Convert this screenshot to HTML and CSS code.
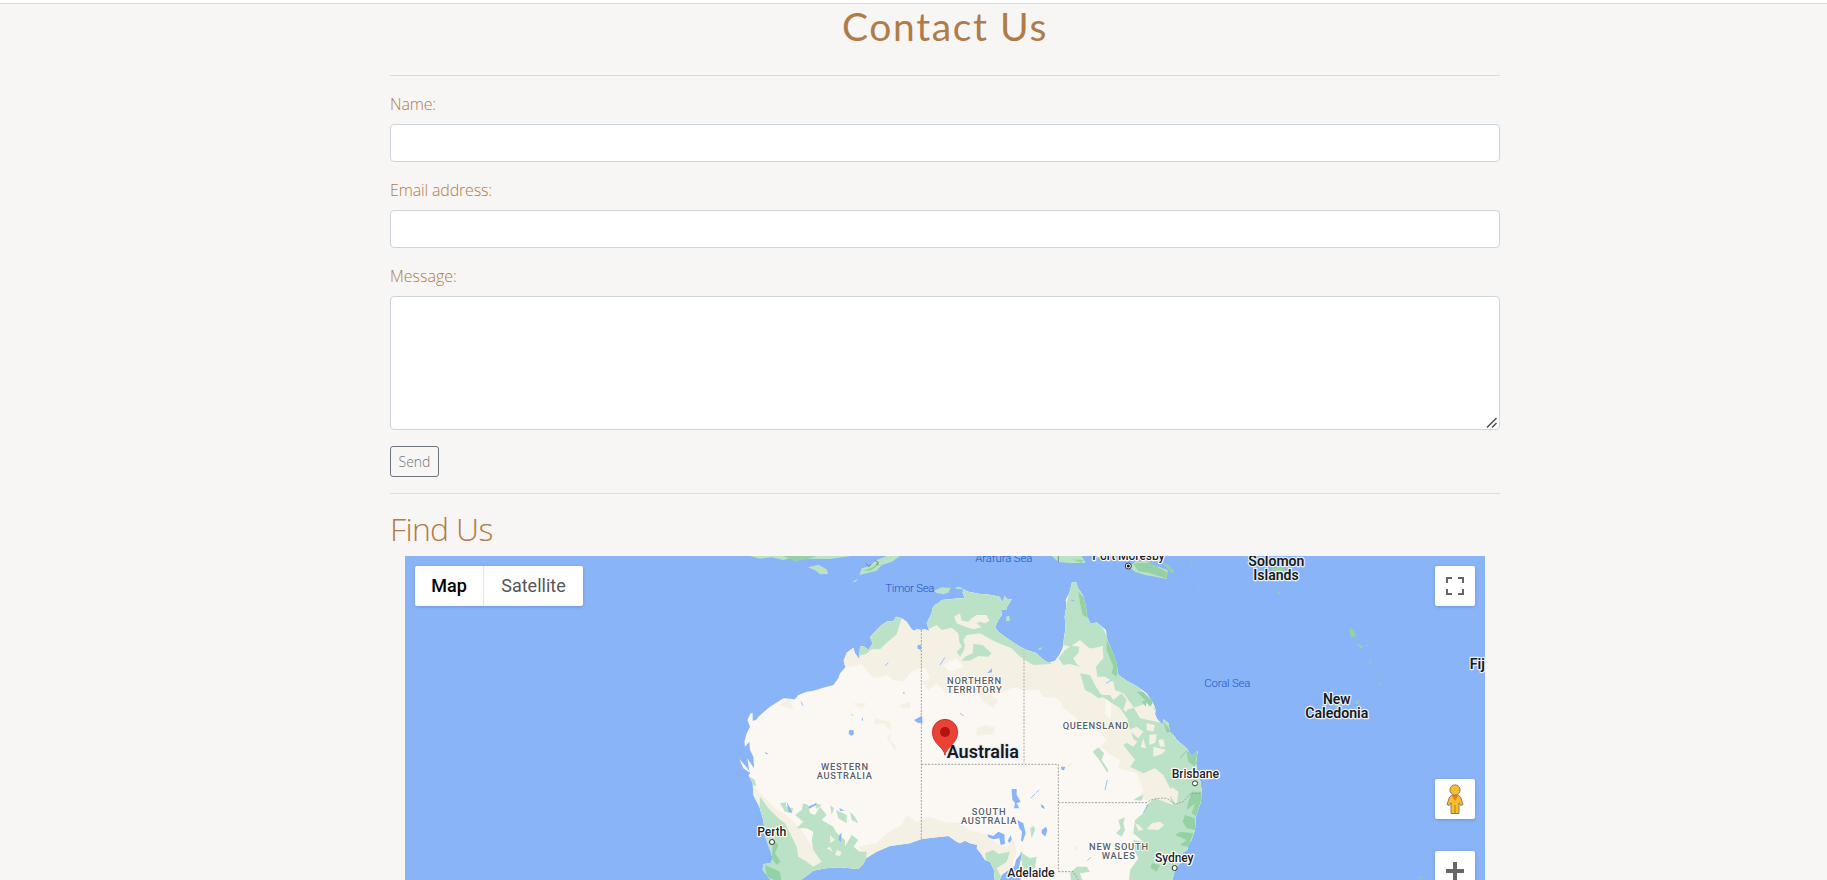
FILE: index.html
```html
<!DOCTYPE html>
<html lang="en">
<head>
<meta charset="utf-8">
<title>Contact Us</title>
<link rel="stylesheet" href="styles.css">
</head>
<body>
<div class="topbar"></div>
<main class="page">
  <h1 class="title"><span>Contact Us</span></h1>
  <hr class="rule">
  <form class="form">
    <div class="group"><label class="label name" for="name">Name:</label><input class="control" id="name" type="text"></div>
    <div class="group"><label class="label email" for="email">Email address:</label><input class="control" id="email" type="email"></div>
    <div class="group area-wrap"><label class="label message" for="msg">Message:</label><textarea class="control area" id="msg" rows="5"></textarea><svg class="grip" width="12" height="12" viewBox="0 0 12 12"><path d="M1 10.500 10.500 1M6 10.500 10.500 6"/></svg></div>
    <button class="send" type="button">Send</button>
  </form>
  <hr class="rule">
  <h2 class="subtitle">Find Us</h2>
  <div class="map">
    <svg class="canvas" viewBox="-975 18 3240 972" preserveAspectRatio="none">
      <defs>
        <path id="land" d="M515 205L530 215 545 238 555 243 560 236 572 240 585 238 598 243 590 220 605 190 607 175 615 165 625 160 635 150 690 145 705 146 698 128 700 118 715 125 750 132 785 135 810 141 812 152 820 153 823 138 832 147 845 148 838 160 832 168 828 180 813 178 815 195 805 210 795 232 805 245 835 268 870 290 890 300 920 310 938 328 955 338 975 332 988 315 998 295 1002 265 1007 235 1004 200 1010 165 1007 150 1018 130 1025 98 1038 95 1045 115 1060 138 1067 165 1072 200 1082 222 1100 217 1128 240 1132 270 1145 300 1160 340 1165 375 1190 392 1220 408 1250 430 1268 455 1277 480 1275 492 1282 508 1298 525 1300 508 1315 520 1320 545 1335 560 1340 570 1370 595 1385 620 1403 602 1398 640 1403 665 1410 690 1415 720 1413 755 1398 800 1395 840 1385 870 1375 885 1372 900 1358 908 1350 940 1335 960 1325 1000 870 1000 872 980 868 948 875 915 877 903 870 915 858 930 854 948 835 960 815 975 805 1000 795 1000 792 960 780 935 765 930 752 910 740 895 742 885 720 880 705 872 690 880 680 875 655 858 620 862 575 867 540 880 480 888 440 905 408 925 400 942 385 957 330 952 285 955 250 962 220 985 200 1000 130 1000 110 975 98 960 100 942 122 940 128 925 120 900 105 860 100 810 88 770 70 735 68 700 55 675 62 670 40 655 28 627 44 645 58 663 52 625 72 655 70 620 60 600 58 575 45 590 43 575 50 550 60 530 52 510 62 490 68 490 68 512 78 510 85 500 120 470 160 445 195 448 205 435 230 425 250 422 285 412 310 405 325 385 330 370 346 352 341 332 350 308 370 293 375 310 388 328 390 290 400 288 415 300 428 280 420 262 440 240 455 225 470 215 490 213 498 200Z"/>
        <clipPath id="inland"><use href="#land"/></clipPath>
      </defs>
      <rect class="water" x="-975" y="18" width="3240" height="972"/>
      <use href="#land" class="land"/>
      <g clip-path="url(#inland)">
        <!-- dry grassland -->
        <path class="sand" d="M330 352L365 350 395 342 430 385 470 375 490 390 520 395 540 370 560 358 585 352 600 385 575 395 595 420 620 400 650 430 700 435 740 430 760 455 790 475 805 450 780 435 810 430 850 412 880 420 925 420 940 440 985 445 1000 475 1035 500 1060 530 1105 545 1130 570 1110 590 1150 620 1170 630 1165 655 1220 670 1240 720 1225 745 1330 770 1340 720 1420 720 1380 560 1180 380 1050 200 1000 90 600 100 330 240ZM62 700L130 770 175 800 215 840 240 880 278 930 400 920 385 890 440 880 470 850 515 825 530 795 560 815 600 800 640 815 690 820 720 840 760 850 800 880 830 895 850 870 860 905 830 990 700 985 560 870 410 950 240 1000 190 920 60 760ZM145 465L180 445 190 480 165 470ZM365 460L410 460 395 475ZM435 505L480 515 485 545 460 520 435 525ZM470 560L485 550 480 570 500 590 495 602ZM510 465L542 455 540 475 515 475ZM740 535L765 525 795 532 790 552 740 558ZM1010 650L1025 635 1022 650ZM1030 895L1045 885 1038 905Z"/>
        <path class="land" d="M1060 670L1090 655 1110 680 1140 690 1160 740 1120 755 1065 735ZM1130 440L1145 470 1140 510 1125 490ZM640 345L680 325 700 350 660 365Z"/>
        <!-- vegetated coast and ranges -->
        <path class="green" d="M385 318L408 312 425 298 450 298 470 278 500 253 515 205 480 180 380 250ZM590 240L620 225 635 240 665 233 685 250 688 275 695 290 680 305 690 320 702 300 705 285 700 270 710 255 750 250 790 272 820 285 845 295 870 320 910 345 965 342 920 290 800 220 870 140 690 90 580 170ZM730 282L758 285 785 310 775 320 745 318 720 332 695 332 705 320 728 310ZM985 325L1005 300 1025 287 1048 290 1045 310 1030 325 1040 342 1050 350 1020 342 1000 345ZM1020 290L1050 270 1078 295 1090 295 1118 288 1120 325 1110 335 1098 350 1102 380 1125 380 1150 395 1155 420 1180 430 1210 470 1230 505 1300 520 1160 310 1100 200 1030 80 980 280ZM1050 370L1080 375 1095 405 1110 430 1125 440 1105 445 1085 430 1065 420ZM1110 435L1140 435 1150 450 1175 430 1190 450 1180 480 1215 500 1195 510 1170 475 1140 455ZM1190 480L1250 460 1330 510 1410 600 1430 720 1380 890 1325 1010 1195 1010 1200 960 1225 925 1215 905 1210 870 1240 875 1210 850 1215 810 1240 790 1250 765 1275 745 1330 765 1320 745 1335 720 1320 715 1300 675 1275 655 1240 670 1200 650 1215 630 1180 585 1210 565 1195 525ZM90 740L115 775 145 805 165 820 180 850 200 890 205 920 230 935 250 950 275 935 250 900 245 870 250 845 230 835 200 835 220 815 195 795 215 780 220 760 235 765 240 790 255 795 270 770 290 795 275 810 310 830 320 850 345 870 345 890 365 855 385 870 370 890 390 905 410 905 405 960 230 1000 80 1000ZM150 760L168 757 168 770 190 775 185 790 165 785ZM255 760L275 765 260 778ZM300 765L312 775 305 795ZM318 780L350 795 350 820 325 805ZM360 785L375 800 385 820 365 810ZM765 910L790 900 805 912 840 905 830 935 800 955 815 985 790 1000 770 950ZM870 905L900 925 920 920 915 955 880 965ZM1040 950L1070 950 1080 965 1050 970 1060 1000 1025 1000 1020 970ZM1088 605L1105 592 1122 610 1115 630 1135 660 1132 668 1108 630ZM1165 810L1185 802 1180 820 1185 840 1175 860 1158 850 1172 835ZM900 835L912 828 915 840 905 865ZM1225 740L1240 735 1235 752 1210 750ZM60 680L75 690 78 710 62 700Z"/>
        <path class="sand" d="M672 200L690 190 695 212 715 215 725 205 740 195 770 195 778 212 765 220 750 215 740 220 755 232 730 238 710 232 680 220ZM1195 540L1220 530 1240 545 1225 565ZM1250 520L1275 525 1270 545 1250 540ZM1258 555L1280 552 1276 578 1258 585ZM1240 565L1248 595 1232 592ZM1270 590L1308 600 1295 612 1270 620ZM1285 570L1300 568 1305 590 1290 590ZM1200 560L1222 575 1210 590 1185 575ZM1215 820L1228 825 1240 840 1225 842ZM1265 820L1290 815 1302 825 1285 840 1250 838ZM300 855L315 870 300 880ZM320 900L335 905 330 918 315 915ZM1325 710L1345 725 1340 765 1325 745ZM290 895L300 890 308 905Z"/>
        <!-- dense forest -->
        <path class="forest" d="M1045 125L1070 150 1075 205 1058 195 1050 160ZM1130 270L1165 340 1160 380 1145 370 1150 350 1130 300ZM1220 425L1240 425 1270 455 1260 470 1240 445ZM1235 455L1248 450 1248 470ZM1300 515L1325 545 1310 548ZM1370 605L1403 600 1395 650 1375 635ZM1385 725L1415 725 1412 755 1400 800 1385 790 1395 760 1370 780 1375 755ZM1365 795L1395 805 1395 840 1370 835 1358 815ZM1350 845L1390 850 1375 890 1350 885 1370 870 1335 855ZM130 870L145 885 135 910 152 935 140 945 125 925ZM105 945L150 965 155 1000 110 980ZM1265 940L1290 945 1280 965 1262 955Z"/>
        <!-- lakes -->
        <path class="water" d="M552 510L576 497 578 520 562 518ZM357 541L370 540 372 551 364 558 356 551ZM845 717L860 717 860 735 872 755 860 760 868 775 852 775 855 758 847 750ZM862 810L880 820 887 850 878 875 873 872 876 845 868 835ZM935 840L948 830 952 840 946 860 935 850ZM772 853L790 858 805 845 823 853 825 882 812 885 808 865 790 868 775 862ZM993 650L1006 650 1002 660 995 660ZM932 763L942 768 944 777 935 773ZM833 872L842 855 845 870 838 880ZM235 770L260 758 258 765 238 776ZM328 775L345 782 330 782ZM328 855L335 848 333 875 326 870ZM362 490L372 498 366 496ZM395 510L398 500 399 513ZM105 605L115 612 108 613ZM520 425L526 430 520 431ZM772 370L785 355 786 367ZM563 285L573 285 573 300 563 296ZM170 755L178 770 187 788 176 785Z"/>
        <path class="creek" d="M465 348L475 338M630 345L645 322M213 455L219 467M690 490L701 498M902 745L915 732M918 728L928 720M1125 720L1132 690M1240 788L1255 765M1350 625L1370 602M1022 150L1034 153M1128 400L1145 390M1072 932L1082 922"/>
      </g>
      <!-- Papua, Timor and offshore islands -->
      <path class="green" d="M60 18L90 26 125 22 160 30 195 20 220 26 300 27 363 18ZM234 52L265 44 290 58 295 72 270 73 258 62ZM367 97L383 85 377 96ZM388 75L395 55 420 48 440 30 470 18 510 18 485 36 455 45 440 62 410 70ZM612 122L635 112 662 114 655 128 640 133 618 128ZM675 112L690 110 700 118 680 118ZM828 200L838 197 840 213 829 213ZM922 298L938 291 932 299ZM965 18L1055 18 1067 38 1025 40 985 36ZM1198 52L1215 35 1250 33 1270 45 1313 60 1310 88 1285 82 1245 75 1215 65Z"/>
      <path class="forest" d="M160 18L260 18 230 28 195 34ZM400 62L430 50 440 40 450 42 422 62ZM1025 28L1060 30 1055 38ZM1210 40L1260 38 1310 65 1310 86 1255 68 1225 64ZM1298 40L1312 42 1335 65 1325 70ZM1380 34L1392 40 1384 40ZM1403 115L1417 122 1406 120ZM1635 120L1652 128 1650 132ZM1540 18L1552 18 1548 20ZM1620 54L1660 53 1665 60 1690 65 1700 94 1640 68ZM1858 232L1870 240 1880 258 1863 263ZM1881 278L1900 290 1892 296ZM1905 286L1913 284 1914 290ZM1911 270L1917 269 1914 274ZM1916 331L1924 335 1920 342ZM1942 376L1950 380 1947 382ZM1948 400L1956 402 1950 406ZM1795 450L1820 462 1865 505 1830 485ZM1875 458L1885 449 1887 459 1878 462ZM2068 976L2080 988 2070 984Z"/>
      <path class="boundary" d="M985 18V37M407 40L417 50 423 42M436 32L445 37 440 45"/>
      <path class="border" d="M574 240V866M574 643H985V965M985 758H1252M1255 755Q1270 743 1310 745L1335 763 1360 755 1380 732 1412 730M985 965H1030L1045 990"/>
      <path class="border faint" d="M882 297V640"/>
      <!-- town markers -->
      <g class="town"><circle cx="126" cy="876" r="7.5"/><circle cx="1395" cy="700" r="7.5"/><circle cx="1334" cy="954" r="7.5"/><circle cx="1195" cy="48" r="9"/></g>
      <circle class="dot" cx="1195" cy="48" r="4.5"/>
      <g class="sea">
        <text x="466" y="126" textLength="147">Timor Sea</text>
        <text x="736" y="36" textLength="171">Arafura Sea</text>
        <text x="1423" y="411" textLength="138">Coral Sea</text>
      </g>
      <g class="state">
        <text x="273" y="659" textLength="141">WESTERN</text><text x="260" y="686" textLength="166">AUSTRALIA</text>
        <text x="651" y="402" textLength="162">NORTHERN</text><text x="651" y="429" textLength="164">TERRITORY</text>
        <text x="998" y="536" textLength="197">QUEENSLAND</text>
        <text x="725" y="796" textLength="102">SOUTH</text><text x="693" y="822" textLength="166">AUSTRALIA</text>
        <text x="1077" y="899" textLength="177">NEW SOUTH</text><text x="1115" y="926" textLength="100">WALES</text>
      </g>
      <g class="city">
        <text x="82" y="858" textLength="87">Perth</text>
        <text x="1325" y="683" textLength="142">Brisbane</text>
        <text x="1275" y="936" textLength="116">Sydney</text>
        <text x="832" y="980" textLength="142">Adelaide</text>
        <text x="1087" y="30" textLength="217">Port Moresby</text>
      </g>
      <g class="country">
        <text x="1555" y="48" textLength="168" lengthAdjust="spacingAndGlyphs">Solomon</text><text x="1570" y="90" textLength="136" lengthAdjust="spacingAndGlyphs">Islands</text>
        <text x="1779" y="463" textLength="83" lengthAdjust="spacingAndGlyphs">New</text><text x="1726" y="505" textLength="189" lengthAdjust="spacingAndGlyphs">Caledonia</text>
        <text x="2219" y="357">Fiji</text>
        <text class="nation" x="650" y="624" textLength="217" lengthAdjust="spacingAndGlyphs">Australia</text>
      </g>
      <path class="pin" d="M645 616C641 590 607 582 607 546A38 38 0 0 1 683 546C683 582 649 590 645 616Z"/>
      <circle class="pin-eye" cx="645" cy="546" r="15"/>
    </svg>
    <div class="types"><button class="type active">Map</button><button class="type">Satellite</button></div>
    <button class="tool full" aria-label="Fullscreen"><svg width="18" height="18" viewBox="0 0 18 18"><path fill="#666" d="M0 0h6v2H2v4H0zM12 0h6v6h-2V2h-4zM0 12h2v4h4v2H0zM16 12h2v6h-6v-2h4z"/></svg></button>
    <button class="tool pegman" aria-label="Street View"><svg width="18" height="32" viewBox="0 0 18 32"><path fill="#fbbc2d" stroke="#79735f" stroke-width=".9" d="M5.3 12.5 3.5 14 1 21.5l2.2 1 1.8-2.7V30.5h8V19.800l1.800 2.700 2.200-1L14.500 14l-1.800-1.500Z"/><path d="M9 22v8.500" stroke="#a98230"/><path fill="#e27d31" d="M5.500 12h7L9 18Z"/><circle cx="9" cy="7" r="5.100" fill="#fbbc2d" stroke="#79735f" stroke-width=".9"/></svg></button>
    <button class="tool zoom" aria-label="Zoom in"><svg width="18" height="18" viewBox="0 0 18 18"><path fill="#666" d="M7 0h4v7h7v4h-7v7H7v-7H0V7h7z"/></svg></button>
  </div>
</main>
</body>
</html>
```
FILE: styles.css
```css
*{box-sizing:border-box}
body{margin:0;height:880px;overflow:hidden;background:#f7f6f5;color:#b07b48;font:300 16px/24px "Open Sans","Noto Sans",sans-serif}
.topbar{height:4px;background:#fff;border-bottom:1px solid #d9dadb}
.page{width:1110px;margin-left:390px}
.title{margin:0;height:55px;text-align:center;font:400 39px/45px "Lato",sans-serif;letter-spacing:1.6px}
.rule{height:1px;border:0;background:#dcdcdc;margin:16px 0}
.group{margin-bottom:16px}
.label{display:block;width:max-content;height:24px;margin-bottom:8px}
.name{letter-spacing:-.15px}
.email{letter-spacing:-.15px}
.message{letter-spacing:0}
.control{display:block;width:100%;height:38px;padding:6px 12px;border:1px solid #ced4da;border-radius:4px;background:#fff;font:inherit;outline:0}
.area-wrap{position:relative}
.area{height:134px;resize:none}
.grip{position:absolute;right:2px;bottom:1px;fill:none;stroke:#4c4c50;stroke-width:1.5}
.send{display:block;width:49px;height:31px;padding:0;border:1px solid #6c757d;border-radius:3px;background:transparent;color:#6c757d;font:300 14px/21px "Open Sans",sans-serif}
.subtitle{margin:0 0 8px;height:38px;font-weight:300;font-size:32px;line-height:37px;letter-spacing:-.7px}
.map{position:relative;width:1080px;height:324px;margin-left:15px;overflow:hidden;font-family:Roboto,sans-serif}
.canvas{display:block;width:1080px;height:324px}
.water{fill:#8ab4f8}
.land{fill:#fbf8f3}
.sand{fill:#f5f0e4}
.green{fill:#bbe2c6}
.forest{fill:#94d2a5}
.creek{fill:none;stroke:#8ab4f8;stroke-width:2.5}
.boundary{fill:none;stroke:#777;stroke-width:2.5}
.border{fill:none;stroke:#a3a19d;stroke-width:3;stroke-dasharray:6 4}
.faint{stroke:#cbc8c2;stroke-width:5}
.town{fill:#fff;stroke:#333;stroke-width:3}
.dot{fill:#111}
.canvas text{font-family:Roboto,sans-serif;paint-order:stroke;stroke-linejoin:round}
.sea{font-size:34px;fill:#1558c0}
.state{font-size:28px;font-weight:500;fill:#596066;stroke:#fff;stroke-width:5px}
.city{font-size:37px;font-weight:500;fill:#202124;stroke:#fff;stroke-width:7px}
.country{font-size:43px;font-weight:600;fill:#17191b;stroke:#e9f1fc;stroke-width:7px}
.country .nation{font-size:54px}
.pin{fill:#ea4335;stroke:#b31412;stroke-width:2}
.pin-eye{fill:#b31412}
.types{position:absolute;left:10px;top:10px;display:flex;height:40px;border-radius:2px;background:#fff;box-shadow:0 1px 4px -1px rgba(0,0,0,.3)}
.type{width:99px;padding:0;border:0;background:transparent;color:#565656;font:400 18px/40px Roboto,sans-serif}
.active{width:69px;color:#000;font-weight:500;border-right:1px solid #e6e6e6}
.tool{position:absolute;right:10px;width:40px;height:40px;padding:0;border:0;border-radius:2px;background:#fff;box-shadow:0 1px 4px -1px rgba(0,0,0,.3);display:grid;place-items:center}
.full{top:10px}
.pegman{top:223px}
.zoom{top:295px}
```
